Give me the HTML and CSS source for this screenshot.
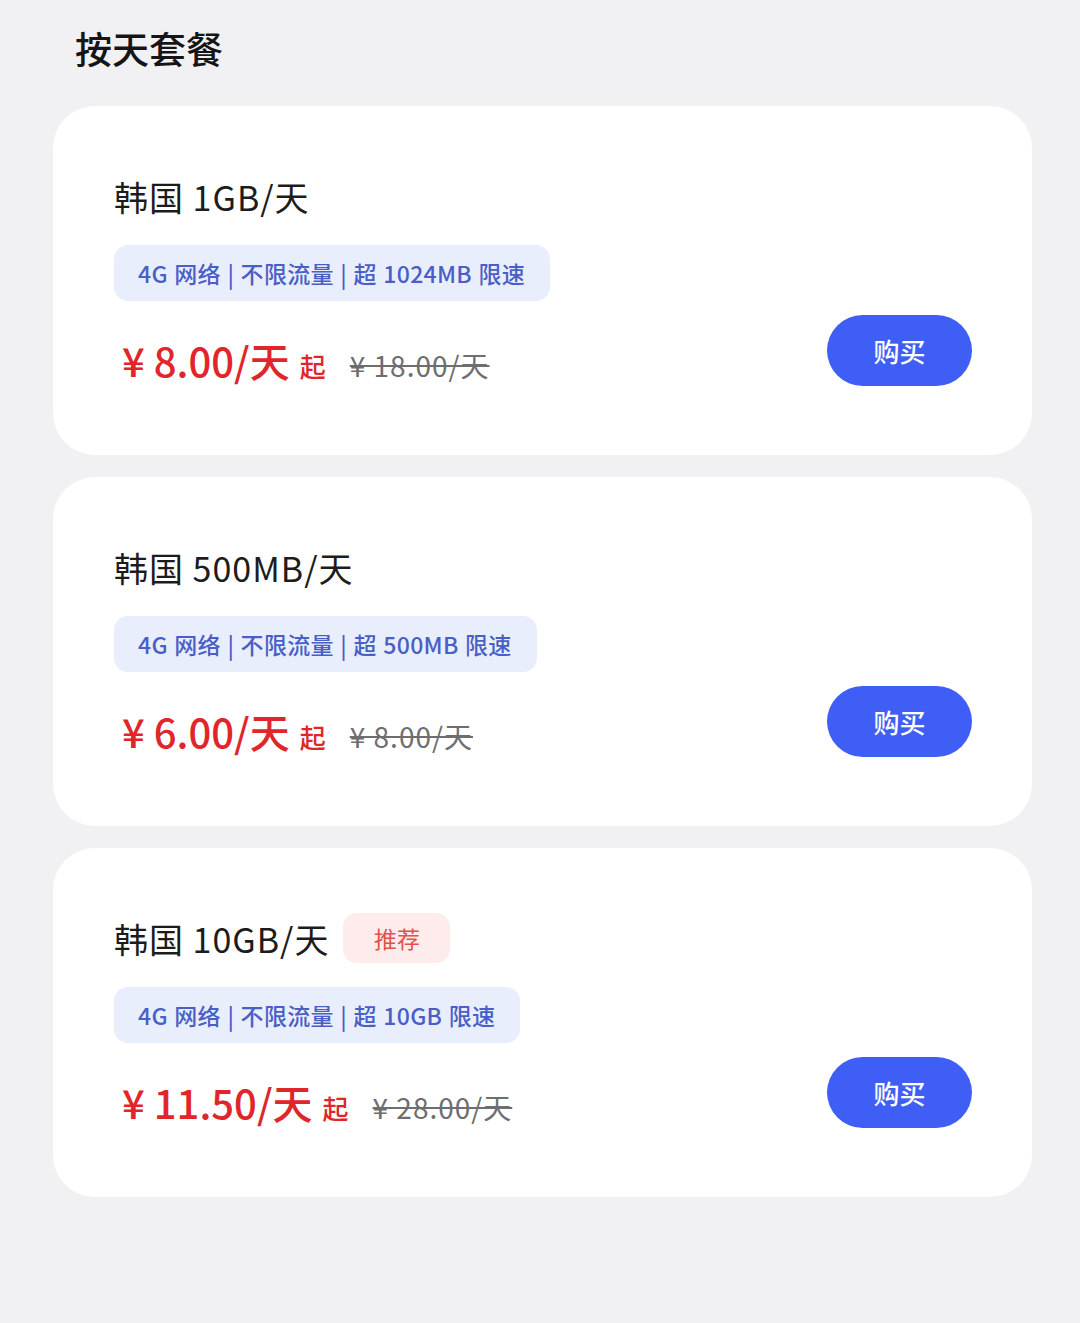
FILE: index.html
```html
<!DOCTYPE html>
<html lang="zh-CN">
<head>
  <meta charset="UTF-8" />
  <meta name="viewport" content="width=device-width, initial-scale=1.0"/>
  <title>按天套餐</title>
  <link rel="stylesheet" href="styles.css">
</head>
<body>

  <!-- Daily plans -->
  <section class="plans">
    <h2 class="plans-title">按天套餐</h2>

    <div class="plan-card">
      <div class="plan-info">
        <div class="plan-name">韩国 1GB/天</div>
        <div class="plan-tag">4G 网络 | 不限流量 | 超 1024MB 限速</div>
        <div class="plan-bottom">
          <div class="price">
            <span class="price-now">¥ 8.00/天</span>
            <span class="price-from">起</span>
            <span class="price-old">¥ 18.00/天</span>
          </div>
          <button class="btn-buy">购买</button>
        </div>
      </div>
    </div>

    <div class="plan-card">
      <div class="plan-info">
        <div class="plan-name">韩国 500MB/天</div>
        <div class="plan-tag">4G 网络 | 不限流量 | 超 500MB 限速</div>
        <div class="plan-bottom">
          <div class="price">
            <span class="price-now">¥ 6.00/天</span>
            <span class="price-from">起</span>
            <span class="price-old">¥ 8.00/天</span>
          </div>
          <button class="btn-buy">购买</button>
        </div>
      </div>
    </div>

    <div class="plan-card">
      <div class="plan-info">
        <div class="plan-name">韩国 10GB/天 <span class="badge">推荐</span></div>
        <div class="plan-tag">4G 网络 | 不限流量 | 超 10GB 限速</div>
        <div class="plan-bottom">
          <div class="price">
            <span class="price-now">¥ 11.50/天</span>
            <span class="price-from">起</span>
            <span class="price-old">¥ 28.00/天</span>
          </div>
          <button class="btn-buy">购买</button>
        </div>
      </div>
    </div>
  </section>

</body>
</html>
```

FILE: styles.css
```css
/* Global */
body {
  font-family: "Noto Sans CJK SC", "Noto Sans", sans-serif;
  margin: 0;
  padding: 0;
  background-color: #f1f1f3;
  color: #1a1a1a;
}

.plans {
  padding: 26px 48px 40px 53px;
}

.plans-title {
  margin: 0 0 36px 22px;
  font-size: 37px;
  line-height: 44px;
  font-weight: 500;
  color: #151515;
}

/* Card */
.plan-card {
  background-color: #ffffff;
  border-radius: 42px;
  padding: 68px 60px 69px 61px;
  margin-bottom: 22px;
}

.plan-name {
  display: flex;
  align-items: center;
  height: 44px;
  font-size: 34px;
  letter-spacing: 1px;
  color: #1c1c1c;
}

.badge {
  display: inline-flex;
  align-items: center;
  justify-content: center;
  width: 107px;
  height: 50px;
  margin-left: 14px;
  border-radius: 14px;
  background-color: #fdeceb;
  color: #e0524a;
  font-size: 23px;
  letter-spacing: 0;
}

.plan-tag {
  display: inline-block;
  margin-top: 27px;
  height: 56px;
  line-height: 56px;
  padding: 0 25px 0 24px;
  border-radius: 14px;
  background-color: #e9eefc;
  color: #4a5ec8;
  font-size: 23px;
  font-weight: 500;
  letter-spacing: 0.3px;
  word-spacing: 1px;
}

.plan-bottom {
  display: flex;
  justify-content: space-between;
  align-items: flex-end;
  margin-top: 14px;
}

.price {
  display: flex;
  align-items: baseline;
  line-height: 40px;
  padding-left: 8px;
}

.price-now {
  font-size: 40px;
  font-weight: 500;
  font-variant-numeric: proportional-nums;
  color: #e1262b;
}

.price-from {
  margin-left: 10px;
  font-size: 26px;
  font-weight: 500;
  color: #e1262b;
}

.price-old {
  margin-left: 24px;
  font-size: 28px;
  letter-spacing: 1px;
  color: #6e6e6e;
  text-decoration: line-through;
}

.btn-buy {
  width: 145px;
  height: 71px;
  border: none;
  border-radius: 36px;
  background-color: #3e5ef6;
  color: #ffffff;
  font-family: inherit;
  font-size: 26px;
  font-weight: 500;
  cursor: pointer;
}
```
